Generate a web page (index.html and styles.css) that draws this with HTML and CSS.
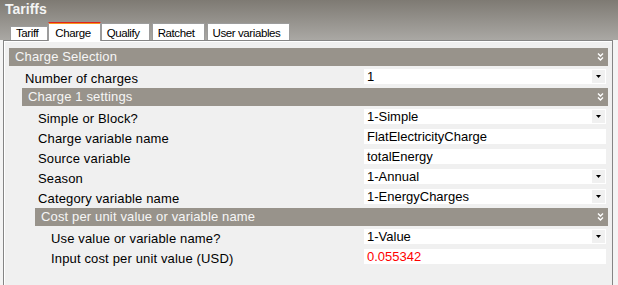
FILE: index.html
```html
<!doctype html>
<html lang="en">
  <head>
    <meta charset="UTF-8" />
    <title>Tariffs</title>
    <link rel="stylesheet" href="styles.css">
  </head>
  <body>
    <div class="titlebar">
      <div class="title">Tariffs</div>
      <div class="tabs">
        <div class="tab short">Tariff</div>
        <div class="tab active">Charge</div>
        <div class="tab">Qualify</div>
        <div class="tab">Ratchet</div>
        <div class="tab">User variables</div>
      </div>
    </div>

    <div class="panel">
      <div class="group">
        <div class="head">
          <span>Charge Selection</span>
          <svg class="chev" width="7" height="8" viewBox="0 0 7 8"><path d="M1 0.5 L3.5 3 L6 0.5 M1 4.5 L3.5 7 L6 4.5" fill="none" stroke="#fff" stroke-width="1.4"/></svg>
        </div>
        <div class="row">
          <span class="label">Number of charges</span>
          <span class="value">
            <span class="text">1</span>
            <span class="drop"><svg width="5" height="3" viewBox="0 0 5 3"><path d="M0 0 H5 L2.5 3 Z" fill="#000"/></svg></span>
          </span>
        </div>

        <div class="group">
          <div class="head">
            <span>Charge 1 settings</span>
            <svg class="chev" width="7" height="8" viewBox="0 0 7 8"><path d="M1 0.5 L3.5 3 L6 0.5 M1 4.5 L3.5 7 L6 4.5" fill="none" stroke="#fff" stroke-width="1.4"/></svg>
          </div>
          <div class="row">
            <span class="label">Simple or Block?</span>
            <span class="value">
              <span class="text">1-Simple</span>
              <span class="drop"><svg width="5" height="3" viewBox="0 0 5 3"><path d="M0 0 H5 L2.5 3 Z" fill="#000"/></svg></span>
            </span>
          </div>
          <div class="row">
            <span class="label">Charge variable name</span>
            <span class="value"><span class="text">FlatElectricityCharge</span></span>
          </div>
          <div class="row">
            <span class="label">Source variable</span>
            <span class="value"><span class="text">totalEnergy</span></span>
          </div>
          <div class="row">
            <span class="label">Season</span>
            <span class="value">
              <span class="text">1-Annual</span>
              <span class="drop"><svg width="5" height="3" viewBox="0 0 5 3"><path d="M0 0 H5 L2.5 3 Z" fill="#000"/></svg></span>
            </span>
          </div>
          <div class="row">
            <span class="label">Category variable name</span>
            <span class="value">
              <span class="text">1-EnergyCharges</span>
              <span class="drop"><svg width="5" height="3" viewBox="0 0 5 3"><path d="M0 0 H5 L2.5 3 Z" fill="#000"/></svg></span>
            </span>
          </div>

          <div class="group">
            <div class="head">
              <span>Cost per unit value or variable name</span>
              <svg class="chev" width="7" height="8" viewBox="0 0 7 8"><path d="M1 0.5 L3.5 3 L6 0.5 M1 4.5 L3.5 7 L6 4.5" fill="none" stroke="#fff" stroke-width="1.4"/></svg>
            </div>
            <div class="row">
              <span class="label">Use value or variable name?</span>
              <span class="value">
                <span class="text">1-Value</span>
                <span class="drop"><svg width="5" height="3" viewBox="0 0 5 3"><path d="M0 0 H5 L2.5 3 Z" fill="#000"/></svg></span>
              </span>
            </div>
            <div class="row">
              <span class="label">Input cost per unit value (USD)</span>
              <span class="value"><span class="text changed">0.055342</span></span>
            </div>
          </div>
        </div>
      </div>
    </div>
  </body>
</html>
```

FILE: styles.css
```css
html,
body {
  margin: 0;
  padding: 0;
}
body {
  width: 618px;
  height: 285px;
  overflow: hidden;
  display: flex;
  flex-direction: column;
  background: #f4f4f4;
  font-family: "Liberation Sans", Arial, sans-serif;
  color: #000;
}

/* title + tab strip */
.titlebar {
  height: 40px;
  flex: none;
  display: flex;
  flex-direction: column;
  background: linear-gradient(180deg, #7e7a73 0%, #aaa8a4 100%);
}
.title {
  padding: 1px 0 0 5px;
  font-size: 14px;
  font-weight: bold;
  line-height: 16px;
  color: #f4f4f4;
}
.tabs {
  margin-top: auto;
  display: flex;
  align-items: flex-end;
  gap: 2px;
  padding-left: 10px;
}
.tab {
  background: #fff;
  border: 1px solid #9c9c9c;
  border-bottom: none;
  padding: 2px 9px 0 5px;
  font-size: 11.5px;
  letter-spacing: -0.4px;
  line-height: 14px;
  white-space: nowrap;
}
.tab.short {
  padding-top: 0;
  line-height: 13px;
}
.tab.active {
  position: relative;
  z-index: 1;
  margin: 0 -2px -1px;
  padding: 3px 9px 1px 6px;
  border-top: 1px solid #e2231a;
  box-shadow: inset 0 1px 0 #f7941d;
}

/* property panel */
.panel {
  flex: 1;
  margin: 0 5px 0 3px;
  padding: 7px 4px 0 5px;
  border: 1px solid #858585;
  border-bottom: none;
  background: #f0f0f0;
  box-shadow: inset 1px 1px 0 #fff;
}
.group .group {
  margin-left: 13px;
}
.head {
  height: 18px;
  margin-bottom: 2px;
  padding: 0 4px 0 6px;
  display: flex;
  align-items: center;
  justify-content: space-between;
  background: #98938b;
  color: #f6f6f6;
  font-size: 13px;
  letter-spacing: 0.15px;
  line-height: 18px;
}
.chev {
  display: block;
}
.row {
  height: 20px;
  display: flex;
  padding-right: 2px;
}
.label {
  flex: 1;
  min-width: 0;
  padding: 2px 0 0 16px;
  font-size: 13px;
  letter-spacing: 0.15px;
  line-height: 18px;
  white-space: nowrap;
}
.value {
  width: 242px;
  height: 15px;
  margin-top: 1px;
  display: flex;
  background: #fff;
}
.value .text {
  flex: 1;
  padding-left: 3px;
  font-size: 13px;
  line-height: 15px;
  white-space: nowrap;
}
.value .changed {
  color: #f00;
}
.drop {
  width: 13px;
  height: 13px;
  margin: 1px;
  display: flex;
  align-items: center;
  justify-content: center;
  background: #f0f0f0;
}
.drop svg {
  display: block;
}
```
